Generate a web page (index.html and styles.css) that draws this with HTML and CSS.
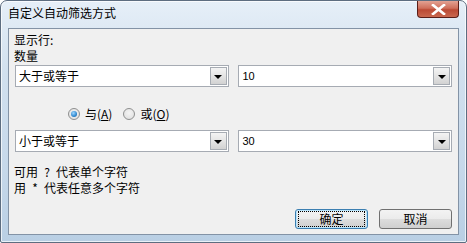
FILE: index.html
```html
<!DOCTYPE html>
<html>
<head>
<meta charset="utf-8">
<link rel="stylesheet" href="styles.css">
</head>
<body>
<div class="window">
  <div class="titlebar">
    <span class="title">自定义自动筛选方式</span>
    <span class="close"><svg width="15" height="11" viewBox="0 0 15 11"><path d="M2 1 L7.5 5.5 L13 1 M2 10 L7.5 5.5 L13 10" stroke="#fff" stroke-width="2.6" fill="none" stroke-linecap="square"/></svg></span>
  </div>
  <div class="client">
    <div class="label">显示行:</div>
    <div class="label">数量</div>
    <div class="row row1">
      <div class="combo c-left"><span class="val">大于或等于</span><span class="drop"><i></i></span></div>
      <div class="combo c-right"><span class="val num">10</span><span class="drop"><i></i></span></div>
    </div>
    <div class="radios">
      <span class="radio checked"><span class="dot"></span></span><span class="rlabel">与(<u>A</u>)</span>
      <span class="radio"></span><span class="rlabel">或(<u>O</u>)</span>
    </div>
    <div class="row row2">
      <div class="combo c-left"><span class="val">小于或等于</span><span class="drop"><i></i></span></div>
      <div class="combo c-right"><span class="val num">30</span><span class="drop"><i></i></span></div>
    </div>
    <div class="hint hint1">可用<span class="sym">?</span>代表单个字符</div>
    <div class="hint">用<span class="sym">*</span>代表任意多个字符</div>
    <div class="buttons">
      <button class="btn default"><span class="focus">确定</span></button>
      <button class="btn">取消</button>
    </div>
  </div>
</div>
</body>
</html>
```
FILE: styles.css
```css
html, body {
  margin: 0;
  padding: 0;
  background: #ffffff;
}
body {
  font-family: "Noto Sans CJK SC", "Noto Sans", sans-serif;
  font-size: 12px;
  color: #000;
}
.window {
  width: 467px;
  height: 243px;
  box-sizing: border-box;
  border: 1px solid #5d6d80;
  border-radius: 7px 7px 2px 2px;
  background: linear-gradient(180deg, #e6eff8 0%, #d1e0ee 30%, #c6d8ea 70%, #b9cfe4 100%);
  display: flex;
  flex-direction: column;
  box-shadow: inset 0 0 0 1px rgba(255,255,255,0.7);
}
.titlebar {
  height: 27px;
  display: flex;
  justify-content: space-between;
  align-items: flex-start;
  padding-left: 7px;
  padding-right: 7px;
}
.title {
  margin-top: 5px;
  line-height: 14px;
  font-size: 12px;
  color: #000;
}
.close {
  width: 42px;
  height: 17px;
  box-sizing: border-box;
  border: 1px solid #5a1e18;
  border-top: none;
  border-radius: 0 0 4px 4px;
  background: linear-gradient(180deg, #e3a293 0%, #cf6f5b 45%, #bb4a35 55%, #c9684f 100%);
  display: flex;
  align-items: center;
  justify-content: center;
}
.client {
  margin: 0 7px;
  height: 207px;
  box-sizing: border-box;
  border: 1px solid #8393a6;
  background: #f0f0f0;
  padding: 3px 6px 0 5px;
  display: flex;
  flex-direction: column;
}
.label {
  line-height: 16px;
  height: 16px;
}
.row {
  display: flex;
  gap: 9px;
  padding-left: 1px;
}
.row1 { margin-top: 1px; }
.row2 { margin-top: 9px; }
.combo {
  height: 22px;
  box-sizing: border-box;
  border: 1px solid #a6abb3;
  background: #fff;
  display: flex;
  align-items: center;
  justify-content: space-between;
  padding: 1px 1px 1px 2px;
}
.c-left { width: 214px; }
.c-right { width: 215px; }
.val {
  line-height: 14px;
  padding-left: 1px;
}
.num {
  font-family: "Liberation Sans", Arial, sans-serif;
  font-size: 11px;
  padding-left: 2px;
}
.drop {
  width: 17px;
  height: 18px;
  box-sizing: border-box;
  border: 1px solid #a7acb3;
  background: linear-gradient(180deg, #f4f4f4 0%, #e4e4e4 50%, #d2d2d2 100%);
  display: flex;
  align-items: center;
  justify-content: center;
}
.drop i {
  width: 0;
  height: 0;
  border-left: 4px solid transparent;
  border-right: 4px solid transparent;
  border-top: 4px solid #000;
  margin-top: 2px;
}
.radios {
  margin-top: 20px;
  height: 14px;
  display: flex;
  align-items: center;
  padding-left: 54px;
}
.radio {
  width: 12px;
  height: 12px;
  box-sizing: border-box;
  border-radius: 50%;
  border: 1px solid #8e8f8f;
  background: radial-gradient(circle at 50% 40%, #f4f4f4 0%, #dcdcdc 100%);
  display: flex;
  align-items: center;
  justify-content: center;
}
.dot {
  width: 6px;
  height: 6px;
  border-radius: 50%;
  background: radial-gradient(circle at 40% 35%, #9fd7ff 0%, #2e88d0 60%, #1c5a93 100%);
}
.rlabel {
  margin-left: 5px;
  margin-right: 11px;
  line-height: 14px;
}
.rlabel u {
  text-decoration: underline;
}
.hint {
  line-height: 16px;
  height: 16px;
  display: flex;
  align-items: center;
}
.sym {
  display: inline-block;
  width: 18px;
  text-align: center;
}
.hint1 { margin-top: 12px; }
.buttons {
  margin-top: 13px;
  display: flex;
  justify-content: flex-end;
  gap: 11px;
  padding-right: 0px;
}
.btn {
  width: 73px;
  height: 20px;
  box-sizing: border-box;
  border: 1px solid #707070;
  border-radius: 3px;
  background: linear-gradient(180deg, #f3f3f3 0%, #ebebeb 50%, #dddddd 51%, #cfcfcf 100%);
  font-family: "Noto Sans CJK SC", "Noto Sans", sans-serif;
  font-size: 12px;
  line-height: 14px;
  padding: 0;
  color: #000;
  display: flex;
  align-items: center;
  justify-content: center;
}
.default {
  border-color: #3c7fb1;
  box-shadow: inset 0 0 0 1px #b9e4fb;
}
.focus {
  display: flex;
  align-items: center;
  justify-content: center;
  width: 65px;
  height: 14px;
  border: 1px dotted #000;
}
```
